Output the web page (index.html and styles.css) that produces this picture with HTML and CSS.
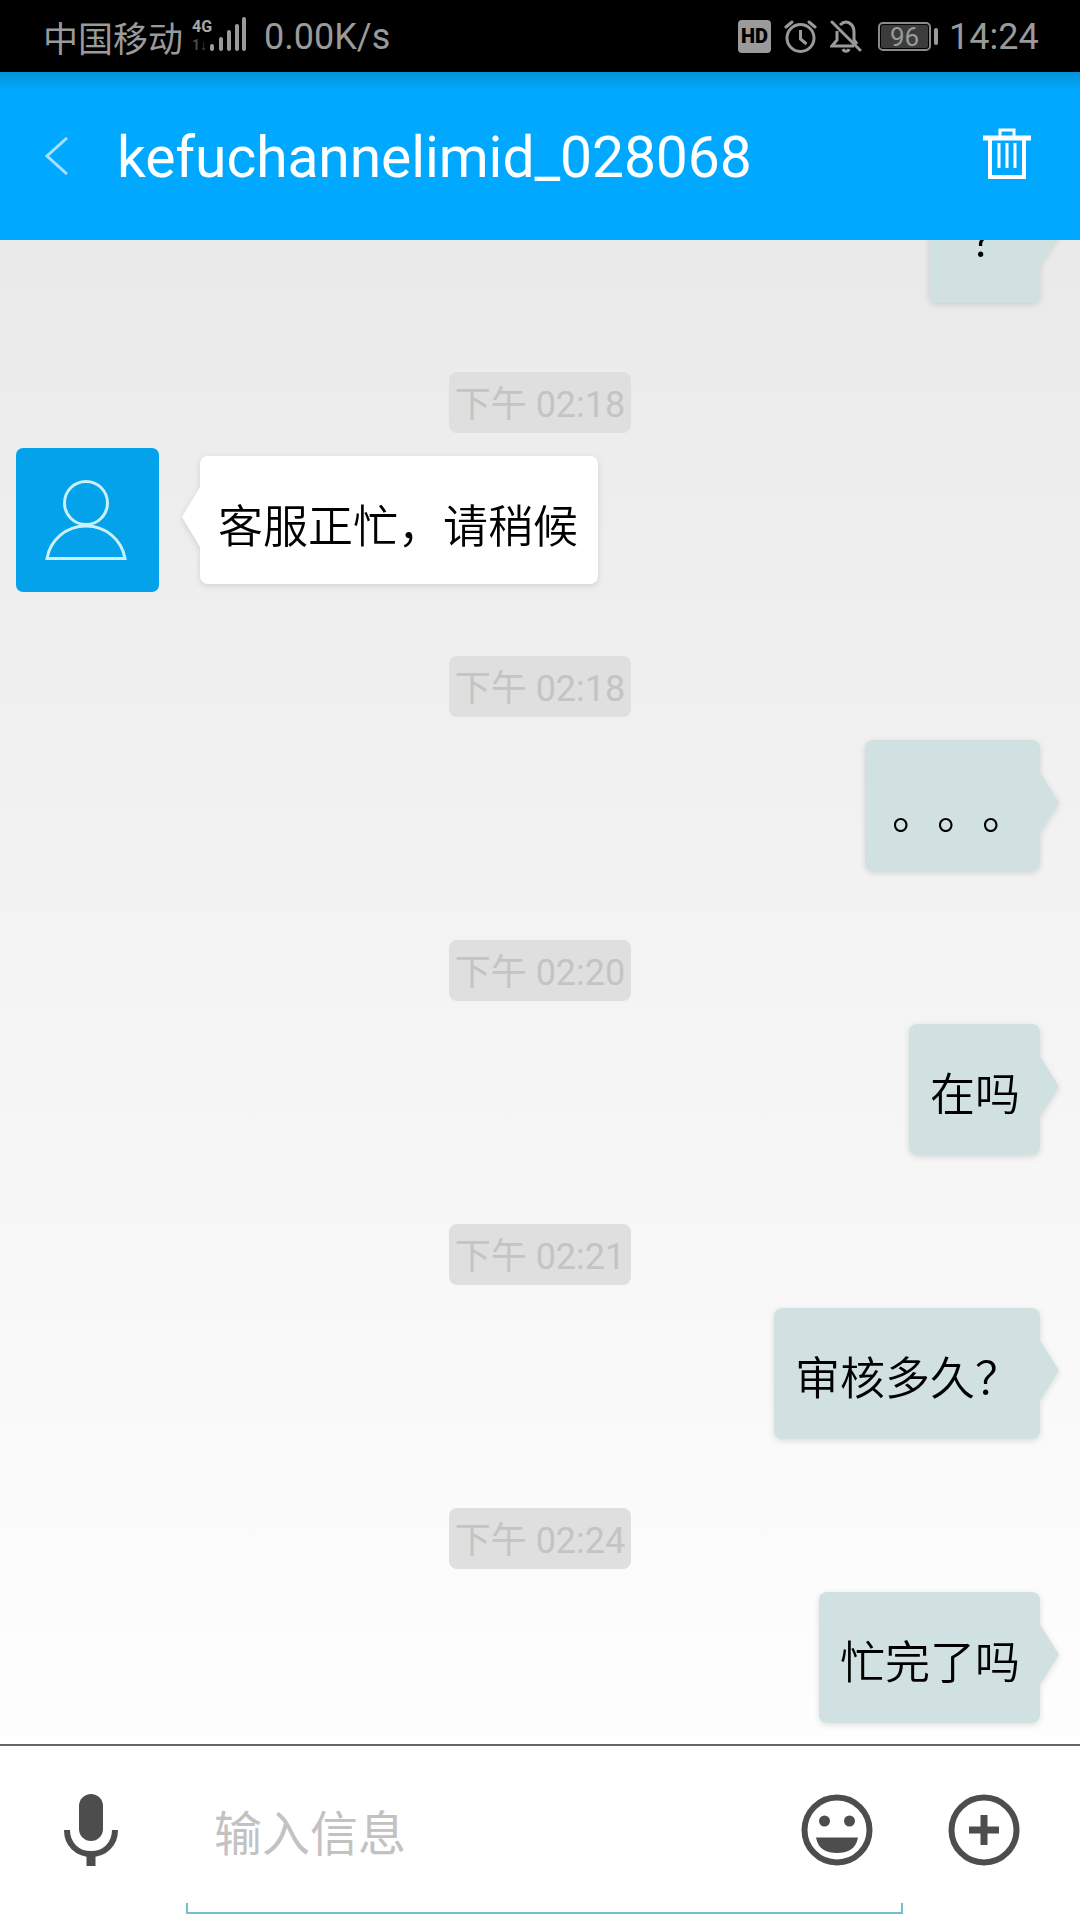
FILE: index.html
```html
<!DOCTYPE html>
<html lang="zh-CN">
<head>
<meta charset="utf-8">
<title>kefuchannelimid_028068</title>
<link rel="stylesheet" href="styles.css">
</head>
<body>
<div class="app">
  <div class="status">
    <span class="carrier">中国移动</span>
    <svg class="sig" width="55" height="36" viewBox="0 0 55 36">
      <text x="0" y="15" class="sig-4g">4G</text>
      <text x="0" y="33" class="sig-1">1↓</text>
      <rect x="18" y="27" width="4" height="7" rx="2" fill="#9a9a9a"/>
      <rect x="27" y="20" width="4" height="14" rx="2" fill="#9a9a9a"/>
      <rect x="35" y="13" width="4" height="21" rx="2" fill="#9a9a9a"/>
      <rect x="43" y="7" width="4" height="27" rx="2" fill="#9a9a9a"/>
      <rect x="50" y="0" width="4" height="34" rx="2" fill="#9a9a9a"/>
    </svg>
    <span class="speed">0.00K/s</span>
    <span class="hd">HD</span>
    <svg class="alarm" width="33" height="33" viewBox="0 0 33 33" fill="none" stroke="#9a9a9a" stroke-width="3">
      <circle cx="16.5" cy="18" r="13.5"/>
      <path d="M16.5 10v9l6 5"/>
      <path d="M2 7l6-5M31 7l-6-5" stroke-linecap="round"/>
    </svg>
    <svg class="bell" width="32" height="34" viewBox="0 0 32 34" fill="none" stroke="#9a9a9a" stroke-width="3">
      <path d="M2 3l28 28" stroke-linecap="round"/>
      <path d="M10 6c2-2 4-3 6-3s8 2 8 10v8l3 4M7 12v9l-5 6h22"/>
      <path d="M13 30c1 3 5 3 6 0" />
    </svg>
    <div class="batt"><div class="batt-body">96</div><div class="batt-nub"></div></div>
    <span class="clock">14:24</span>
  </div>

  <div class="header">
    <svg class="back" width="23" height="38" viewBox="0 0 23 38" fill="none" stroke="#a9defd" stroke-width="3">
      <path d="M22 1L2 19l20 18"/>
    </svg>
    <h1 class="title">kefuchannelimid_028068</h1>
    <svg class="trash" width="48" height="52" viewBox="0 0 48 52" fill="none" stroke="#fff">
      <path d="M0 10h48" stroke-width="5"/>
      <path d="M17 9V2h14v7" stroke-width="3"/>
      <path d="M7 12v37h34V12" stroke-width="4"/>
      <path d="M16 15v25M24 15v25M32 15v25" stroke-width="3"/>
    </svg>
  </div>

  <div class="chat">
    <div class="group">
      <div class="bubble out q">？</div>
    </div>
    <div class="group group-in">
      <div class="chip">下午 02:18</div>
      <div class="row">
        <div class="avatar">
          <svg width="143" height="144" viewBox="0 0 143 144" fill="none" stroke="#c9f0fb" stroke-width="3">
            <circle cx="70" cy="55" r="21.5"/>
            <path d="M31 110.500h78C106 92 90 78 70 78S34 92 31 110.500z"/>
          </svg>
        </div>
        <div class="bubble in">客服正忙，请稍候</div>
      </div>
    </div>
    <div class="group">
      <div class="chip">下午 02:18</div>
      <div class="bubble out dots">。。。</div>
    </div>
    <div class="group">
      <div class="chip">下午 02:20</div>
      <div class="bubble out">在吗</div>
    </div>
    <div class="group">
      <div class="chip">下午 02:21</div>
      <div class="bubble out">审核多久？</div>
    </div>
    <div class="group">
      <div class="chip">下午 02:24</div>
      <div class="bubble out">忙完了吗</div>
    </div>
  </div>

  <div class="bar">
    <div class="bar-row">
      <svg class="mic" width="54" height="72" viewBox="0 0 54 72">
        <rect x="15" y="0" width="24" height="47" rx="12" fill="#4d4d4d"/>
        <path d="M3 36c0 14 10 24 24 24s24-10 24-24" fill="none" stroke="#4d4d4d" stroke-width="6"/>
        <rect x="22.500" y="58" width="9" height="14" fill="#4d4d4d"/>
      </svg>
      <span class="placeholder">输入信息</span>
      <svg class="smile" width="72" height="72" viewBox="0 0 72 72">
        <circle cx="36" cy="36" r="32.500" fill="none" stroke="#4d4d4d" stroke-width="6"/>
        <circle cx="23.500" cy="27" r="5.500" fill="#4d4d4d"/>
        <circle cx="48.500" cy="27" r="5.500" fill="#4d4d4d"/>
        <path d="M15 43.500h42c-2 12-11 15.500-21 15.500s-19-3.500-21-15.500z" fill="#4d4d4d"/>
      </svg>
      <svg class="plus" width="72" height="72" viewBox="0 0 72 72">
        <circle cx="36" cy="36" r="32.500" fill="none" stroke="#4d4d4d" stroke-width="6"/>
        <path d="M21 36h30M36 21v30" fill="none" stroke="#4d4d4d" stroke-width="7"/>
      </svg>
    </div>
    <div class="underline"></div>
  </div>
</div>
</body>
</html>
```
FILE: styles.css
```css
* { box-sizing: border-box; }
html, body { margin: 0; padding: 0; }
body { background: #fff; font-family: Roboto, "Noto Sans CJK SC", sans-serif; text-spacing-trim: space-all; }
.app { width: 1080px; height: 1920px; display: flex; flex-direction: column; overflow: hidden; }

.status { height: 72px; flex: none; background: #000; color: #9a9a9a; display: flex; align-items: center; padding-left: 44px; font-size: 36px; }
.carrier { width: 140px; font-size: 35px; white-space: nowrap; margin-left: -1px; margin-right: 1px; }
.sig { margin-left: 8px; margin-top: -2px; overflow: visible; }
.sig-4g { font: 700 16px "Roboto", sans-serif; fill: #a8a8a8; }
.sig-1 { font: 700 14px "Roboto", sans-serif; fill: #4a4a4a; }
.speed { margin-left: 17px; margin-top: 2px; width: 125px; white-space: nowrap; }
.hd { margin-left: 349px; width: 33px; height: 33px; background: #9a9a9a; border-radius: 4px; color: #000; font: 900 20px/33px Roboto, sans-serif; text-align: center; }
.alarm { margin-left: 13px; }
.bell { margin-left: 13px; }
.batt { margin-left: 16px; display: flex; align-items: center; gap: 3px; }
.batt-body { width: 53px; height: 29px; border: 2px solid #8a8a8a; border-radius: 5px; background: #3c3c3c; background-clip: content-box; padding: 1px; color: #9a9a9a; font-size: 26px; line-height: 25px; text-align: center; }
.batt-nub { width: 4px; height: 17px; background: #9a9a9a; border-radius: 2px; }
.clock { margin-left: 11px; margin-top: 2px; white-space: nowrap; }

.header { height: 168px; flex: none; background: linear-gradient(#0392d6, #00a9ff 18px); display: flex; align-items: center; padding: 0 49px 0 45px; color: #fff; }
.title { margin: 2px 0 0 49px; font-size: 57px; font-weight: 400; white-space: nowrap; flex: 1; letter-spacing: -0.1px; }
.trash { margin-top: -4px; }

.chat { flex: 1; min-height: 0; overflow: hidden; display: flex; flex-direction: column; justify-content: flex-end; gap: 69px; padding-bottom: 21px; background: linear-gradient(#eaeaea, #fefefe); }
.group { flex: none; display: flex; flex-direction: column; gap: 23px; align-items: center; }
.group-in { gap: 15px; margin-bottom: -5px; align-items: stretch; }
.chip { align-self: center; width: 182px; height: 61px; padding-top: 3px; background: #dfdfdf; border-radius: 8px; color: #c4c4c4; font-size: 36px; line-height: 61px; text-align: center; white-space: nowrap; }
.row { display: flex; align-items: center; padding-left: 16px; gap: 41px; }
.avatar { width: 143px; height: 144px; background: #04a2ea; border-radius: 7px; }
.avatar svg { display: block; }
.bubble { position: relative; height: 131px; display: flex; align-items: center; border-radius: 8px; font-size: 45px; color: #000; white-space: nowrap; font-weight: 350; filter: drop-shadow(0 2px 3px rgba(0,0,0,.12)); }
.bubble::after { content: ""; position: absolute; top: 50%; width: 19px; height: 60px; margin-top: -33px; }
.out { align-self: flex-end; margin-right: 40px; padding: 4px 20px 0 21px; background: #d1e1e2; }
.out::after { left: 100%; background: #d1e1e2; clip-path: polygon(0 0, 100% 50%, 0 100%); }
.in { height: 128px; padding: 6px 20px 0 18px; background: #fff; }
.in::after { right: 100%; width: 18px; background: #fff; clip-path: polygon(100% 0, 0 50%, 100% 100%); }
.q { padding: 0 0 0 41px; width: 111px; }
.dots { padding: 8px 13px 0 27px; }

.bar { height: 176px; flex: none; background: #fff; border-top: 2px solid #666; padding-top: 48px; }
.bar-row { display: flex; align-items: center; height: 72px; padding-left: 64px; }
.placeholder { margin-left: 96px; font-size: 48px; font-weight: 400; color: #c2c2c2; white-space: nowrap; }
.smile { margin-left: auto; }
.plus { margin-left: 75px; margin-right: 60px; }
.underline { margin: 37px 0 0 186px; width: 717px; height: 11px; border: 2px solid #74c0cf; border-top: 0; }
```
